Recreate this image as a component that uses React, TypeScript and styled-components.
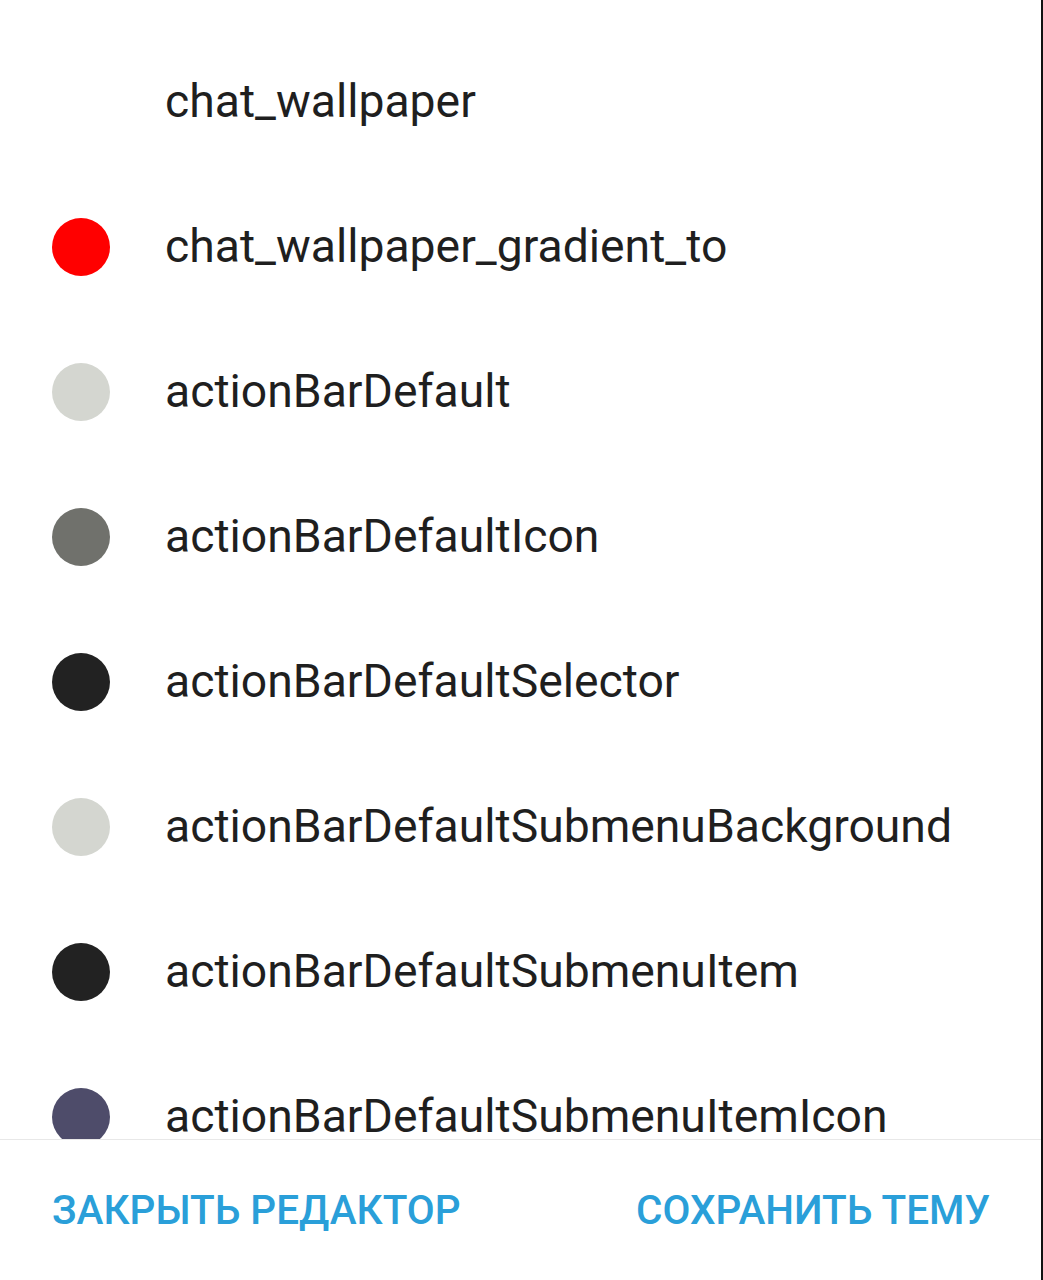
import React from "react";
import styled, { createGlobalStyle } from "styled-components";

const Global = createGlobalStyle`
  html, body { margin: 0; padding: 0; background: #ffffff; }
  body { font-family: Roboto, "Noto Sans", sans-serif; }
`;

const Screen = styled.div`
  width: 1043px;
  height: 1280px;
  display: flex;
  flex-direction: column;
  background: #ffffff;
  box-sizing: border-box;
  border-right: 2px solid #111;
  overflow: hidden;
`;

const List = styled.div`
  height: 1139px;
  overflow: hidden;
  padding-top: 29px;
  box-sizing: border-box;
  display: flex;
  flex-direction: column;
  flex-shrink: 0;
`;

const Row = styled.div`
  height: 145px;
  flex-shrink: 0;
  display: flex;
  align-items: center;
  padding-left: 52px;
  box-sizing: border-box;
`;

const Swatch = styled.div<{ $color?: string }>`
  width: 58px;
  height: 58px;
  border-radius: 50%;
  flex-shrink: 0;
  background: ${(p) => p.$color ?? "transparent"};
`;

const Label = styled.span`
  margin-left: 55px;
  font-size: 46.3px;
  line-height: 1;
  color: #1f1f1f;
  white-space: nowrap;
`;

const Divider = styled.div`
  height: 1px;
  background: #e8e8e8;
  flex-shrink: 0;
`;

const Footer = styled.div`
  flex: 1;
  display: flex;
  align-items: center;
  justify-content: space-between;
  padding: 0 51px 0 52px;
  box-sizing: border-box;
`;

const Action = styled.span`
  font-size: 40.5px;
  font-weight: 500;
  color: #2a9fd9;
  text-transform: uppercase;
  white-space: nowrap;
`;

const items: { name: string; color?: string }[] = [
  { name: "chat_wallpaper" },
  { name: "chat_wallpaper_gradient_to", color: "#ff0000" },
  { name: "actionBarDefault", color: "#d4d6d0" },
  { name: "actionBarDefaultIcon", color: "#70716c" },
  { name: "actionBarDefaultSelector", color: "#222222" },
  { name: "actionBarDefaultSubmenuBackground", color: "#d4d6d0" },
  { name: "actionBarDefaultSubmenuItem", color: "#222222" },
  { name: "actionBarDefaultSubmenuItemIcon", color: "#4e4c6a" },
];

export default function App() {
  return (
    <>
      <Global />
      <Screen>
        <List>
          {items.map((it) => (
            <Row key={it.name}>
              <Swatch $color={it.color} />
              <Label>{it.name}</Label>
            </Row>
          ))}
        </List>
        <Divider />
        <Footer>
          <Action>Закрыть редактор</Action>
          <Action>Сохранить тему</Action>
        </Footer>
      </Screen>
    </>
  );
}
